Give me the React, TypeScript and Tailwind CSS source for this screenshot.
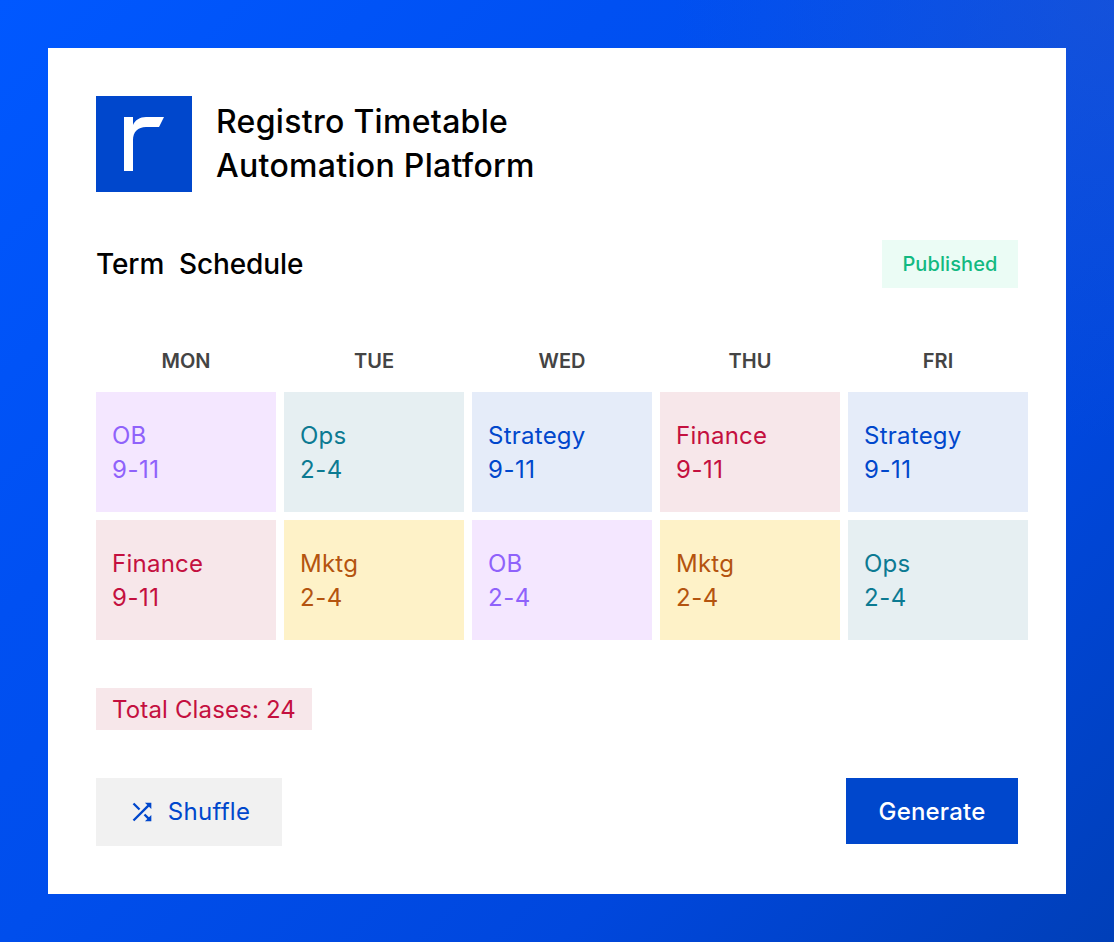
import { MdShuffle } from "react-icons/md";

const days = ["MON", "TUE", "WED", "THU", "FRI"];

const tones = {
  ob: "bg-[#f4e7ff] text-[#8f62fb]",
  ops: "bg-[#e6eff2] text-[#0c7a92]",
  strategy: "bg-[#e5ecf9] text-[#0047cc]",
  finance: "bg-[#f7e7ea] text-[#c4103f]",
  mktg: "bg-[#fef2c8] text-[#b4540f]",
};

const slots: { name: string; time: string; tone: keyof typeof tones }[] = [
  { name: "OB", time: "9-11", tone: "ob" },
  { name: "Ops", time: "2-4", tone: "ops" },
  { name: "Strategy", time: "9-11", tone: "strategy" },
  { name: "Finance", time: "9-11", tone: "finance" },
  { name: "Strategy", time: "9-11", tone: "strategy" },
  { name: "Finance", time: "9-11", tone: "finance" },
  { name: "Mktg", time: "2-4", tone: "mktg" },
  { name: "OB", time: "2-4", tone: "ob" },
  { name: "Mktg", time: "2-4", tone: "mktg" },
  { name: "Ops", time: "2-4", tone: "ops" },
];

export default function App() {
  return (
    <div className="h-[942px] w-[1114px] overflow-hidden bg-[radial-gradient(circle_at_100%_0%,rgba(50,90,200,0.4)_0px,rgba(50,90,200,0)_440px),linear-gradient(135deg,#0058ff_0%,#0050f2_30%,#004eec_46%,#0047dd_73%,#003fb8_100%)] p-12 font-['Inter',sans-serif]">
      <div className="h-[846px] w-[1018px] bg-white p-12">
        <div className="flex items-center gap-6">
          <div className="flex h-24 w-24 items-center justify-center bg-[#0047cc]">
            <svg width="96" height="96" viewBox="0 0 96 96" fill="#fff">
              <path d="M28 21h9v8c2-5 7-8 13-8h18l-5 10H50c-8 0-13 5-13 13v31h-9z" />
            </svg>
          </div>
          <h1 className="text-[32px] leading-[44px] font-medium tracking-[0.3px] text-black">
            Registro Timetable
            <br />
            Automation Platform
          </h1>
        </div>

        <div className="mt-12 flex h-12 items-center justify-between">
          <h2 className="text-[28px] leading-none font-medium tracking-[-0.1px] whitespace-pre text-black">Term  Schedule</h2>
          <span className="flex h-12 w-[136px] items-center justify-center bg-[#ebfcf5] text-xl font-medium tracking-[0.1px] text-[#12b981]">Published</span>
        </div>

        <div className="mt-12 grid w-[932px] grid-cols-[repeat(5,180px)] gap-2">
          {days.map((day) => (
            <div key={day} className="mb-2 flex h-[40px] items-end justify-center text-xl leading-[30px] font-semibold text-[#444444]">
              {day}
            </div>
          ))}
          {slots.map((slot, i) => (
            <div key={i} className={`flex h-[120px] flex-col justify-center px-4 pt-[2px] text-2xl leading-[34px] tracking-[0.25px] ${tones[slot.tone]}`}>
              <span>{slot.name}</span>
              <span className="tracking-[0.5px]">{slot.time}</span>
            </div>
          ))}
        </div>

        <div className="mt-12 flex h-[42px] w-[216px] items-center justify-center bg-[#f7e7ea] pt-[2px] text-2xl tracking-[0.15px] text-[#c4103f]">Total Clases: 24</div>

        <div className="mt-12 flex items-start justify-between">
          <button className="flex h-[68px] w-[186px] items-center justify-center gap-3 bg-[#f1f1f1] text-2xl tracking-[0.3px] text-[#0047cc]">
            <MdShuffle size={28} />
            Shuffle
          </button>
          <button className="flex h-[66px] w-[172px] items-center justify-center bg-[#0047cc] pt-[2px] text-2xl font-[450] tracking-[0.2px] text-white">Generate</button>
        </div>
      </div>
    </div>
  );
}
